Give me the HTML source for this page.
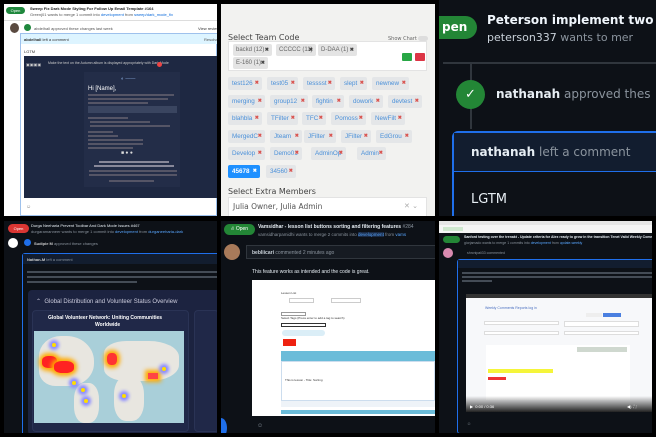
<!DOCTYPE html>
<html><head><meta charset="utf-8"><style>
*{margin:0;padding:0;box-sizing:border-box}
body{width:656px;height:437px;background:#000;position:relative;overflow:hidden;font-family:"Liberation Sans",sans-serif}
.a{position:absolute}
.t{position:absolute;white-space:nowrap}
.tag{position:absolute;height:13px;background:#e4e6e8;color:#4a90d9;font-size:6.3px;line-height:13px;padding-left:4px;border-radius:2px;white-space:nowrap;overflow:hidden;font-family:"Liberation Sans",sans-serif}
.tag b{color:#d9534f;font-size:5px;position:absolute;right:3px;top:0}
.gt{position:absolute;height:12px;background:#e4e4e4;color:#666;font-size:6px;line-height:12px;padding-left:3px;border-radius:2px;white-space:nowrap;font-family:"Liberation Sans",sans-serif}
.gt b{position:absolute;right:3px;top:0;font-size:5px;color:#444}
</style></head><body>

<!-- Panel 1 -->
<div class="a" style="left:4px;top:4px;width:213px;height:212px;background:#fff;overflow:hidden">
 <div class="a" style="left:2px;top:3px;width:19px;height:7px;background:#1f883d;border-radius:4px;color:#fff;font-size:4px;line-height:7px;text-align:center">Open</div>
 <div class="t" style="left:26px;top:2px;font-size:4px;color:#222;font-weight:bold">Sweep Fix Dark Mode Styling For Follow Up Email Template #164</div>
 <div class="t" style="left:26px;top:8px;font-size:4px;color:#555">Greenj01 wants to merge 1 commit into <span style="color:#0969da">development</span> from <span style="color:#0969da">sweep/dark_mode_fix</span></div>
 <div class="a" style="left:0;top:16px;width:213px;height:1px;background:#ddd"></div>
 <div class="a" style="left:6px;top:19px;width:9px;height:10px;border-radius:50%;background:#5a4a40"></div>
 <div class="a" style="left:20px;top:20px;width:7px;height:7px;border-radius:50%;background:#1f883d"></div>
 <div class="t" style="left:30px;top:22px;font-size:4px;color:#555">abdelhall approved these changes last week</div>
 <div class="t" style="left:194px;top:22px;font-size:4px;color:#333">View reviewed</div>
 <div class="a" style="left:16px;top:29px;width:197px;height:183px;border:1px solid #9ec1ec;background:#fff"></div>
 <div class="a" style="left:17px;top:30px;width:196px;height:10px;background:#ddf4ff"></div>
 <div class="t" style="left:20px;top:33px;font-size:4px;color:#333"><b>abdelhall</b> left a comment</div>
 <div class="t" style="left:200px;top:33px;font-size:4px;color:#555">Resolve</div>
 <div class="t" style="left:20px;top:45px;font-size:4px;color:#333">LGTM</div>
 <div class="a" style="left:20px;top:52px;width:193px;height:142px;background:#1e2842"></div>
 <div class="t" style="left:22px;top:58px;font-size:4px;color:#ccc">▣▣▣▣</div>
 <div class="t" style="left:44px;top:57px;font-size:3.5px;color:#ccc">Make the text on the Autumn album is displayed appropriately with Dark Mode</div>
 <div class="a" style="left:153px;top:58px;width:5px;height:5px;border-radius:50%;background:#e44"></div>
 <div class="a" style="left:80px;top:68px;width:96px;height:115px;background:#232d48"></div>
 <div class="t" style="left:117px;top:72px;font-size:5px;color:#8ad">◐ ——</div>
 <div class="t" style="left:84px;top:82px;font-size:6px;color:#fff">Hi [Name],</div>
 <div class="a" style="left:84px;top:90px;width:86px;height:2px;background:#556"></div>
 <div class="a" style="left:84px;top:94px;width:80px;height:2px;background:#556"></div>
 <div class="a" style="left:84px;top:98px;width:60px;height:2px;background:#556"></div>
 <div class="a" style="left:84px;top:102px;width:89px;height:7px;background:#3a4560"></div>
 <div class="a" style="left:84px;top:113px;width:40px;height:2px;background:#556"></div>
 <div class="a" style="left:86px;top:117px;width:60px;height:2px;background:#556"></div>
 <div class="a" style="left:86px;top:121px;width:80px;height:2px;background:#556"></div>
 <div class="a" style="left:84px;top:127px;width:25px;height:2px;background:#556"></div>
 <div class="a" style="left:84px;top:131px;width:30px;height:2px;background:#556"></div>
 <div class="a" style="left:84px;top:135px;width:55px;height:2px;background:#556"></div>
 <div class="a" style="left:84px;top:139px;width:55px;height:2px;background:#556"></div>
 <div class="a" style="left:84px;top:143px;width:45px;height:2px;background:#556"></div>
 <div class="t" style="left:117px;top:146px;font-size:5px;color:#ddd">■ ● ●</div>
 <div class="a" style="left:95px;top:157px;width:70px;height:2px;background:#889"></div>
 <div class="a" style="left:90px;top:161px;width:80px;height:2px;background:#889"></div>
 <div class="a" style="left:85px;top:166px;width:88px;height:2px;background:#556"></div>
 <div class="a" style="left:85px;top:170px;width:88px;height:2px;background:#556"></div>
 <div class="a" style="left:105px;top:176px;width:45px;height:2px;background:#556"></div>
 <div class="t" style="left:22px;top:200px;font-size:5px;color:#888">☺</div>
</div>

<!-- Panel 2 -->
<div class="a" style="left:221px;top:4px;width:214px;height:212px;background:#f2f2f0;overflow:hidden;font-family:'DejaVu Sans',sans-serif">
 <div class="t" style="left:7px;top:29px;font-size:8px;color:#444">Select Team Code</div>
 <div class="t" style="left:167px;top:32px;font-size:5px;color:#666">Show Chart</div>
 <div class="a" style="left:197px;top:32px;width:10px;height:5px;border-radius:3px;background:#ddd"></div>
 <div class="a" style="left:7px;top:37px;width:199px;height:30px;background:#fff;border:1px solid #e3e3e3"></div>
 <div class="gt" style="left:12px;top:40px;width:39px">backd (12)<b>✖</b></div>
 <div class="gt" style="left:55px;top:40px;width:40px">CCCCC (11)<b>✖</b></div>
 <div class="gt" style="left:97px;top:40px;width:39px">D-DAA (1)<b>✖</b></div>
 <div class="gt" style="left:12px;top:53px;width:35px">E-160 (1)<b>✖</b></div>
 <div class="a" style="left:181px;top:49px;width:10px;height:8px;background:#28a745;border-radius:1px"></div>
 <div class="a" style="left:194px;top:49px;width:10px;height:8px;background:#dc3545;border-radius:1px"></div>

 <div class="tag" style="left:7px;top:73px;width:34px">test126<b>✖</b></div>
 <div class="tag" style="left:46px;top:73px;width:31px">test05<b>✖</b></div>
 <div class="tag" style="left:82px;top:73px;width:32px">tesssst<b>✖</b></div>
 <div class="tag" style="left:119px;top:73px;width:27px">slept<b>✖</b></div>
 <div class="tag" style="left:151px;top:73px;width:37px">newnew<b>✖</b></div>

 <div class="tag" style="left:7px;top:91px;width:37px">merging<b>✖</b></div>
 <div class="tag" style="left:49px;top:91px;width:38px">group12<b>✖</b></div>
 <div class="tag" style="left:91px;top:91px;width:32px">fightin<b>✖</b></div>
 <div class="tag" style="left:128px;top:91px;width:34px">dowork<b>✖</b></div>
 <div class="tag" style="left:167px;top:91px;width:34px">devtest<b>✖</b></div>

 <div class="tag" style="left:7px;top:108px;width:34px">blahbla<b>✖</b></div>
 <div class="tag" style="left:46px;top:108px;width:31px">TFilter<b>✖</b></div>
 <div class="tag" style="left:81px;top:108px;width:24px">TFC<b>✖</b></div>
 <div class="tag" style="left:110px;top:108px;width:35px">Pomoss<b>✖</b></div>
 <div class="tag" style="left:150px;top:108px;width:34px">NewFilt<b>✖</b></div>

 <div class="tag" style="left:7px;top:126px;width:37px">MergedC<b>✖</b></div>
 <div class="tag" style="left:49px;top:126px;width:32px">Jteam<b>✖</b></div>
 <div class="tag" style="left:83px;top:126px;width:32px">JFilter<b>✖</b></div>
 <div class="tag" style="left:120px;top:126px;width:30px">JFilter<b>✖</b></div>
 <div class="tag" style="left:155px;top:126px;width:36px">EdGrou<b>✖</b></div>

 <div class="tag" style="left:7px;top:143px;width:37px">Develop<b>✖</b></div>
 <div class="tag" style="left:49px;top:143px;width:32px">Demo01<b>✖</b></div>
 <div class="tag" style="left:90px;top:143px;width:35px">AdminOp<b>✖</b></div>
 <div class="tag" style="left:136px;top:143px;width:29px">Admin<b>✖</b></div>

 <div class="tag" style="left:7px;top:161px;width:32px;background:#1e90ff;color:#fff;font-weight:bold">45678<b style="color:#fff">✖</b></div>
 <div class="tag" style="left:45px;top:161px;width:30px">34560<b>✖</b></div>
 <div class="t" style="left:7px;top:183px;font-size:8px;color:#444">Select Extra Members</div>
 <div class="a" style="left:7px;top:193px;width:199px;height:21px;background:#fff;border:1px solid #e3e3e3"></div>
 <div class="t" style="left:12px;top:198px;font-size:7.5px;color:#555">Julia Owner, Julia Admin</div>
 <div class="t" style="left:183px;top:198px;font-size:7px;color:#aaa">✕ ⌄</div>
</div>

<!-- Panel 3 -->
<div class="a" style="left:439px;top:0;width:217px;height:216px;background:#0d1117;overflow:hidden;font-family:'DejaVu Sans',sans-serif">
 <div class="a" style="left:-15px;top:16px;width:53px;height:23px;border-radius:12px;background:#238636"></div>
 <div class="t" style="left:3px;top:20px;font-size:12px;color:#fff;font-weight:bold">pen</div>
 <div class="t" style="left:48px;top:13px;font-size:12px;color:#f0f6fc;font-weight:bold">Peterson implement two</div>
 <div class="t" style="left:48px;top:31px;font-size:11px;color:#8b949e"><span style="color:#c9d1d9">peterson337</span> wants to mer</div>
 <div class="a" style="left:4px;top:62px;width:213px;height:2px;background:#30363d"></div>
 <div class="a" style="left:31px;top:64px;width:2px;height:65px;background:#30363d"></div>
 <div class="a" style="left:17px;top:80px;width:29px;height:29px;border-radius:50%;background:#238636;color:#fff;text-align:center;font-size:13px;line-height:29px">✓</div>
 <div class="t" style="left:57px;top:87px;font-size:12px;color:#8b949e"><b style="color:#e6edf3">nathanah</b> approved thes</div>
 <div class="a" style="left:13px;top:131px;width:210px;height:100px;border:2px solid #1f6feb;border-radius:6px;background:#0d1117"></div>
 <div class="a" style="left:15px;top:133px;width:202px;height:38px;background:#121d2f"></div>
 <div class="a" style="left:15px;top:171px;width:202px;height:1px;background:#1f6feb"></div>
 <div class="t" style="left:32px;top:145px;font-size:12px;color:#8b949e"><b style="color:#e6edf3">nathanah</b> left a comment</div>
 <div class="t" style="left:32px;top:192px;font-size:13px;color:#e6edf3">LGTM</div>
</div>

<!-- Panel 4 -->
<div class="a" style="left:4px;top:221px;width:213px;height:212px;background:#0d1117;overflow:hidden">
 <div class="a" style="left:4px;top:3px;width:21px;height:9px;background:#da3633;border-radius:5px;color:#fff;font-size:4px;line-height:9px;text-align:center">Open</div>
 <div class="t" style="left:27px;top:2px;font-size:4px;color:#e6edf3">Durga Neeharia Prevent Toolbar And Dark Mode Issues #467</div>
 <div class="t" style="left:27px;top:8px;font-size:4px;color:#8b949e">durgaramanneer wants to merge 1 commit into <span style="color:#58a6ff">development</span> from <span style="color:#58a6ff">durganeeharia-dark</span></div>
 <div class="a" style="left:4px;top:17px;width:10px;height:10px;border-radius:50%;background:#fff"></div>
 <div class="a" style="left:20px;top:18px;width:7px;height:7px;border-radius:50%;background:#1f6feb"></div>
 <div class="t" style="left:30px;top:20px;font-size:4px;color:#8b949e"><b style="color:#ccc">Sudipie M</b> approved these changes</div>
 <div class="a" style="left:18px;top:32px;width:200px;height:185px;border:1px solid #1f6feb;border-radius:3px"></div>
 <div class="a" style="left:19px;top:33px;width:199px;height:10px;background:#121d2f"></div>
 <div class="t" style="left:23px;top:36px;font-size:4px;color:#8b949e"><b style="color:#ccc">Nathan-M</b> left a comment</div>
 <div class="a" style="left:23px;top:50px;width:190px;height:2px;background:#444c56"></div>
 <div class="a" style="left:23px;top:55px;width:190px;height:2px;background:#444c56"></div>
 <div class="a" style="left:23px;top:60px;width:110px;height:2px;background:#444c56"></div>
 <div class="a" style="left:24px;top:69px;width:195px;height:145px;background:#1c2340;border-radius:4px"></div>
 <div class="t" style="left:32px;top:77px;font-size:6px;color:#ccd">⌃ &nbsp;Global Distribution and Volunteer Status Overview</div>
 <div class="a" style="left:28px;top:89px;width:157px;height:122px;background:#202848;border:1px solid #2a3355;border-radius:4px"></div>
 <div class="a" style="left:190px;top:89px;width:25px;height:122px;background:#202848;border:1px solid #2a3355;border-radius:4px"></div>
 <div class="t" style="left:44px;top:94px;font-size:5px;color:#fff;font-weight:bold">Global Volunteer Network: Uniting Communities</div>
 <div class="t" style="left:91px;top:101px;font-size:5px;color:#fff;font-weight:bold">Worldwide</div>
 <div class="a" style="left:30px;top:110px;width:150px;height:92px;background:#a9cfd9;overflow:hidden">
  <div class="a" style="left:5px;top:5px;width:55px;height:50px;background:#e8e6e0;border-radius:40% 50% 45% 30%"></div>
  <div class="a" style="left:40px;top:52px;width:25px;height:40px;background:#e8e6e0;border-radius:40%"></div>
  <div class="a" style="left:70px;top:10px;width:75px;height:40px;background:#e8e6e0;border-radius:30% 40% 40% 30%"></div>
  <div class="a" style="left:80px;top:45px;width:30px;height:45px;background:#e8e6e0;border-radius:40%"></div>
  <div class="a" style="left:8px;top:25px;width:15px;height:12px;background:#f22;border-radius:40%;box-shadow:0 0 4px 3px #fa0"></div>
  <div class="a" style="left:20px;top:30px;width:20px;height:12px;background:#f22;border-radius:40%;box-shadow:0 0 4px 3px #fa0"></div>
  <div class="a" style="left:73px;top:22px;width:10px;height:12px;background:#f33;border-radius:40%;box-shadow:0 0 4px 3px #fa0"></div>
  <div class="a" style="left:114px;top:42px;width:10px;height:6px;background:#f44;box-shadow:0 0 4px 3px #fa0"></div>
  <div class="a" style="left:18px;top:12px;width:4px;height:4px;background:#fd0;border-radius:50%;box-shadow:0 0 3px 3px #88f"></div>
  <div class="a" style="left:38px;top:50px;width:4px;height:4px;background:#fd0;border-radius:50%;box-shadow:0 0 3px 3px #88f"></div>
  <div class="a" style="left:47px;top:57px;width:4px;height:4px;background:#fd0;border-radius:50%;box-shadow:0 0 3px 3px #88f"></div>
  <div class="a" style="left:50px;top:68px;width:4px;height:4px;background:#fd0;border-radius:50%;box-shadow:0 0 3px 3px #88f"></div>
  <div class="a" style="left:88px;top:63px;width:4px;height:4px;background:#fd0;border-radius:50%;box-shadow:0 0 3px 3px #88f"></div>
  <div class="a" style="left:128px;top:36px;width:4px;height:4px;background:#fd0;border-radius:50%;box-shadow:0 0 3px 3px #88f"></div>
 </div>
</div>

<!-- Panel 5 -->
<div class="a" style="left:221px;top:221px;width:214px;height:212px;background:#0d1117;overflow:hidden">
 <div class="a" style="left:3px;top:3px;width:31px;height:11px;background:#238636;border-radius:6px;color:#fff;font-size:5px;line-height:11px;text-align:center">⛙ Open</div>
 <div class="t" style="left:37px;top:3px;font-size:5px;color:#e6edf3;font-weight:bold">Vamsidhar - lesson list buttons sorting and filtering features <span style="color:#8b949e;font-weight:normal">#284</span></div>
 <div class="t" style="left:37px;top:11px;font-size:4.5px;color:#8b949e">vamsidharpamidhi wants to merge 2 commits into <span style="color:#58a6ff;background:#1a2a44">development</span> from <span style="color:#58a6ff">vams</span></div>
 <div class="a" style="left:3px;top:23px;width:16px;height:16px;border-radius:50%;background:#a87a5a"></div>
 <div class="a" style="left:25px;top:24px;width:190px;height:14px;background:#161b22;border:1px solid #30363d"></div>
 <div class="t" style="left:31px;top:29px;font-size:5px;color:#8b949e"><b style="color:#c9d1d9">bebliicari</b> commented 2 minutes ago</div>
 <div class="t" style="left:31px;top:48px;font-size:5px;color:#e6edf3">This feature works as intended and the code is great.</div>
 <div class="a" style="left:31px;top:59px;width:183px;height:136px;background:#fff"></div>
 <div class="t" style="left:60px;top:70px;font-size:3px;color:#333">Lesson List</div>
 <div class="a" style="left:68px;top:77px;width:25px;height:5px;border:1px solid #ccc"></div>
 <div class="a" style="left:110px;top:77px;width:30px;height:5px;border:1px solid #ccc"></div>
 <div class="a" style="left:60px;top:91px;width:25px;height:4px;border:1px solid #999"></div>
 <div class="t" style="left:60px;top:95px;font-size:3px;color:#333">Select Tags (Press enter to add a tag to search)</div>
 <div class="a" style="left:60px;top:102px;width:45px;height:4px;border:1px solid #333"></div>
 <div class="a" style="left:61px;top:109px;width:43px;height:6px;background:#dbeef7;border-radius:3px"></div>
 <div class="a" style="left:62px;top:118px;width:13px;height:7px;background:#e21"></div>
 <div class="a" style="left:60px;top:130px;width:154px;height:10px;background:#6bbcd9"></div>
 <div class="a" style="left:60px;top:140px;width:154px;height:40px;background:#fff;border:1px solid #cde"></div>
 <div class="t" style="left:64px;top:157px;font-size:3px;color:#333">This is lesson - Title: Sorting</div>
 <div class="a" style="left:60px;top:180px;width:154px;height:6px;background:#eef3f8"></div>
 <div class="a" style="left:60px;top:189px;width:154px;height:4px;background:#6bbcd9"></div>
 <div class="t" style="left:36px;top:202px;font-size:6px;color:#8b949e">☺</div>
 <div class="a" style="left:-6px;top:197px;width:12px;height:20px;border-radius:50%;background:#1f6feb"></div>
</div>

<!-- Panel 6 -->
<div class="a" style="left:439px;top:221px;width:213px;height:212px;background:#0d1117;overflow:hidden">
 <div class="a" style="left:0;top:0;width:213px;height:4px;background:#e6e6e6"></div>
 <div class="a" style="left:0;top:4px;width:213px;height:8px;background:#f5f5f5"></div>
 <div class="a" style="left:4px;top:6px;width:20px;height:4px;background:#cfe8cf"></div>
 <div class="a" style="left:4px;top:15px;width:17px;height:7px;background:#238636;border-radius:4px"></div>
 <div class="t" style="left:25px;top:14px;font-size:3.5px;color:#e6edf3;font-weight:bold">Sanford testing over the trenakt - Update criteria for Alex ready to grow in the transition Tenet Valid Weekly Comments</div>
 <div class="t" style="left:25px;top:20px;font-size:3.5px;color:#8b949e">giorjamado wants to merge 1 commits into <span style="color:#58a6ff">development</span> from <span style="color:#58a6ff">update-weekly</span></div>
 <div class="a" style="left:4px;top:27px;width:10px;height:10px;border-radius:50%;background:#d98ab0"></div>
 <div class="t" style="left:28px;top:30px;font-size:3.5px;color:#8b949e">shrcnipali33 commented</div>
 <div class="a" style="left:18px;top:38px;width:200px;height:175px;border:1px solid #1f6feb;border-radius:3px"></div>
 <div class="a" style="left:19px;top:39px;width:199px;height:8px;background:#121d2f"></div>
 <div class="a" style="left:23px;top:51px;width:190px;height:2px;background:#444c56"></div>
 <div class="a" style="left:23px;top:55px;width:190px;height:2px;background:#444c56"></div>
 <div class="a" style="left:23px;top:59px;width:30px;height:2px;background:#444c56"></div>
 <div class="a" style="left:27px;top:73px;width:190px;height:4px;background:#333"></div>
 <div class="a" style="left:27px;top:77px;width:190px;height:114px;background:#f7f8fa"></div>
 <div class="t" style="left:46px;top:85px;font-size:3.5px;color:#4a6fc0">Weekly Comments Reports log in</div>
 <div class="a" style="left:147px;top:92px;width:16px;height:4px;background:#eee"></div>
 <div class="a" style="left:164px;top:92px;width:18px;height:4px;background:#4a7fe0"></div>
 <div class="a" style="left:45px;top:100px;width:75px;height:4px;background:#fff;border:1px solid #ddd"></div>
 <div class="a" style="left:125px;top:100px;width:75px;height:6px;background:#fff;border:1px solid #ddd"></div>
 <div class="a" style="left:45px;top:110px;width:75px;height:4px;background:#fff;border:1px solid #ddd"></div>
 <div class="a" style="left:125px;top:110px;width:75px;height:4px;background:#fff;border:1px solid #ddd"></div>
 <div class="a" style="left:47px;top:124px;width:144px;height:55px;background:#fff"></div>
 <div class="a" style="left:138px;top:126px;width:50px;height:5px;background:#cfd8cf"></div>
 <div class="a" style="left:49px;top:148px;width:65px;height:4px;background:#f5f53a"></div>
 <div class="a" style="left:49px;top:156px;width:18px;height:3px;background:#e33"></div>
 <div class="a" style="left:27px;top:175px;width:190px;height:16px;background:linear-gradient(transparent,#222)"></div>
 <div class="t" style="left:31px;top:183px;font-size:4px;color:#fff">▶ &nbsp;0:00 / 0:36</div>
 <div class="t" style="left:188px;top:183px;font-size:4px;color:#fff">◀) &nbsp;⛶</div>
 <div class="t" style="left:28px;top:200px;font-size:4px;color:#8b949e">☺</div>
</div>
</body></html>
